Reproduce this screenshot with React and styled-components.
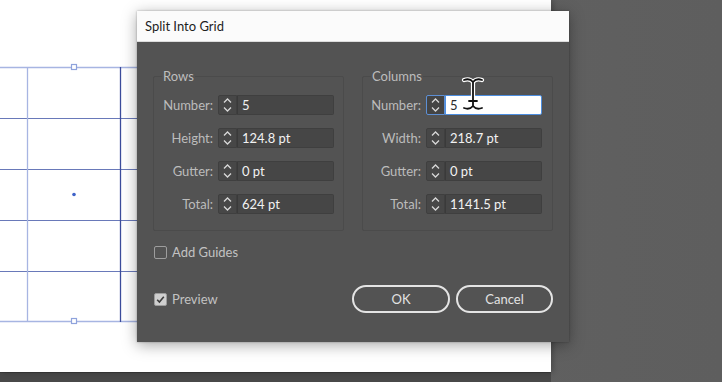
import React from "react";
import styled, { createGlobalStyle, css } from "styled-components";

const Global = createGlobalStyle`
  html, body { margin: 0; padding: 0; background: #5f5f5f; }
  body { font-family: Lato, "Open Sans", "Liberation Sans", sans-serif; }
  * { box-sizing: border-box; }
`;

const Page = styled.div`
  position: relative;
  width: 722px;
  height: 382px;
  overflow: hidden;
  display: grid;
  grid-template-columns: 551px 1fr;
  grid-template-rows: 372px 1fr;
  background: linear-gradient(90deg, #5a5a5a 0%, #626262 40%, #5e5e5e 100%);
`;

const Artboard = styled.div`
  background: #ffffff;
  box-shadow: 2px 0 6px rgba(0, 0, 0, 0.25);
  position: relative;
`;

const Pasteboard = styled.div`
  grid-row: 1 / span 2;
  grid-column: 2;
`;

const BottomStrip = styled.div`
  background: #484848;
  border-top: 1px solid #3a3a3a;
`;

const GridArt = styled.svg`
  display: block;
  width: 551px;
  height: 372px;
`;

const Dialog = styled.div`
  position: absolute;
  left: 137px;
  top: 11px;
  width: 432px;
  height: 331px;
  display: flex;
  flex-direction: column;
  box-shadow: 0 3px 14px rgba(0, 0, 0, 0.35), 0 0 2px rgba(0, 0, 0, 0.3);
`;

const TitleBar = styled.div`
  height: 31px;
  background: #fbfbfb;
  border-bottom: 1px solid #dcdcdc;
  display: flex;
  align-items: center;
  padding-left: 8px;
  font-size: 13px;
  color: #1e1e1e;
`;

const Body = styled.div`
  flex: 1;
  background: #535353;
  padding: 26px 16px 0 16px;
  display: flex;
  flex-direction: column;
`;

const Groups = styled.div`
  display: grid;
  grid-template-columns: 191px 191px;
  gap: 18px;
`;

const Group = styled.fieldset`
  margin: 0;
  height: 163px;
  border: 1px solid #4b4b4b;
  border-radius: 2px;
  padding: 11px ${(p) => p.$right}px 0 0;
  display: flex;
  flex-direction: column;
  gap: 13px;
`;

const Legend = styled.legend`
  font-size: 13px;
  color: #bdbdbd;
  padding: 0 1px;
  margin-left: 8px;
  line-height: 16px;
`;

const Row = styled.div`
  display: grid;
  grid-template-columns: ${(p) => p.$label}px 19px 1fr;
  column-gap: 0;
  height: 20px;
  align-items: stretch;
`;

const Label = styled.label`
  font-size: 13px;
  color: #bcbcbc;
  text-align: right;
  padding-right: 5px;
  line-height: 20px;
`;

const Spinner = styled.div`
  background: #474747;
  border: 1px solid #3f3f3f;
  border-radius: 2px 0 0 2px;
  display: flex;
  align-items: center;
  justify-content: center;
  ${(p) =>
    p.$active &&
    css`
      border: 1px solid #5d8fd4;
      background: #444;
    `}
`;

const Field = styled.div`
  background: #464646;
  border: 1px solid #3f3f3f;
  border-left: 1px solid #3a3a3a;
  border-radius: 0 2px 2px 0;
  font-size: 13px;
  color: #f2f2f2;
  padding-left: 4px;
  line-height: 18px;
  ${(p) =>
    p.$active &&
    css`
      background: #ffffff;
      border: 1px solid #4d8ee0;
      color: #2a2a2a;
    `}
`;

const Footer = styled.div`
  display: flex;
  flex-direction: column;
  padding-left: 1px;
`;

const CheckRow = styled.div`
  display: flex;
  align-items: center;
  gap: 5px;
  font-size: 13px;
  color: #c2c2c2;
  margin-top: ${(p) => p.$top}px;
`;

const Box = styled.span`
  width: 13px;
  height: 13px;
  border-radius: 2px;
  border: 1px solid #9d9d9d;
  background: ${(p) => (p.$checked ? "#cfcfcf" : "transparent")};
  display: inline-flex;
  align-items: center;
  justify-content: center;
`;

const BottomRow = styled.div`
  display: flex;
  align-items: center;
  justify-content: space-between;
  margin-top: 25px;
`;

const Buttons = styled.div`
  display: flex;
  gap: 6px;
`;

const Button = styled.button`
  width: ${(p) => p.$w}px;
  height: 28px;
  border-radius: 14px;
  border: 2px solid #e4e4e4;
  background: transparent;
  color: #e2e2e2;
  font-family: inherit;
  font-size: 13px;
  padding: 0;
`;

const Cursor = styled.svg`
  position: absolute;
  left: 461px;
  top: 77px;
`;

const Chevrons = () => (
  <svg width="11" height="16" viewBox="0 0 11 16">
    <path d="M2 5.5 L5.5 2 L9 5.5" fill="none" stroke="#d8d8d8" strokeWidth="1.3" />
    <path d="M2 10.5 L5.5 14 L9 10.5" fill="none" stroke="#d8d8d8" strokeWidth="1.3" />
  </svg>
);

const Input = ({ label, value, labelW, active }) => (
  <Row $label={labelW}>
    <Label>{label}</Label>
    <Spinner $active={active}>
      <Chevrons />
    </Spinner>
    <Field $active={active}>{value}</Field>
  </Row>
);

export default function App() {
  const light = "#a7b5e2";
  const dark = "#4f62ad";
  return (
    <>
      <Global />
      <Page>
        <Artboard>
          <GridArt viewBox="0 0 551 372">
            {[118, 169, 220, 271].map((y) => (
              <line key={y} x1="0" x2="551" y1={y + 0.5} y2={y + 0.5} stroke={dark} strokeWidth="1.2" opacity="0.85" />
            ))}
            <line x1="0" x2="551" y1="67.5" y2="67.5" stroke={light} strokeWidth="1.3" />
            <line x1="0" x2="551" y1="321.5" y2="321.5" stroke={light} strokeWidth="1.3" />
            <line x1="27.5" x2="27.5" y1="67" y2="322" stroke={light} strokeWidth="1.3" />
            <line x1="120.5" x2="120.5" y1="67" y2="322" stroke="#3c4d9c" strokeWidth="1.3" />
            <rect x="71.5" y="64.5" width="5" height="5" fill="#fff" stroke="#8fa3dc" strokeWidth="1.2" />
            <rect x="71.5" y="318.5" width="5" height="5" fill="#fff" stroke="#8fa3dc" strokeWidth="1.2" />
            <circle cx="74" cy="194.5" r="1.8" fill="#3f63c9" />
          </GridArt>
        </Artboard>
        <Pasteboard />
        <BottomStrip />

        <Dialog>
          <TitleBar>Split Into Grid</TitleBar>
          <Body>
            <Groups>
              <Group $right={9}>
                <Legend>Rows</Legend>
                <Input label="Number:" value="5" labelW={64} />
                <Input label="Height:" value="124.8 pt" labelW={64} />
                <Input label="Gutter:" value="0 pt" labelW={64} />
                <Input label="Total:" value="624 pt" labelW={64} />
              </Group>
              <Group $right={10}>
                <Legend>Columns</Legend>
                <Input label="Number:" value="5" labelW={63} active />
                <Input label="Width:" value="218.7 pt" labelW={63} />
                <Input label="Gutter:" value="0 pt" labelW={63} />
                <Input label="Total:" value="1141.5 pt" labelW={63} />
              </Group>
            </Groups>
            <Footer>
              <CheckRow $top={13}>
                <Box />
                Add Guides
              </CheckRow>
              <BottomRow>
                <CheckRow $top={0}>
                  <Box $checked>
                    <svg width="11" height="11" viewBox="0 0 11 11">
                      <path d="M2.2 5.8 L4.4 8 L8.8 2.8" fill="none" stroke="#3c3c3c" strokeWidth="1.6" />
                    </svg>
                  </Box>
                  Preview
                </CheckRow>
                <Buttons>
                  <Button $w={98}>OK</Button>
                  <Button $w={97}>Cancel</Button>
                </Buttons>
              </BottomRow>
            </Footer>
          </Body>
        </Dialog>

        <Cursor width="24" height="34" viewBox="0 0 24 34">
          <g fill="none" strokeLinecap="round">
            <path d="M3 3 C7 1.5 10 2.5 12 5 C14 2.5 17 1.5 21 3 M12 5 V29 M3 31 C7 32.5 10 31.5 12 29 C14 31.5 17 32.5 21 31 M8 24 H16" stroke="#fff" strokeWidth="4.2" />
            <path d="M3 3 C7 1.5 10 2.5 12 5 C14 2.5 17 1.5 21 3 M12 5 V29 M3 31 C7 32.5 10 31.5 12 29 C14 31.5 17 32.5 21 31 M8 24 H16" stroke="#111" strokeWidth="1.8" />
          </g>
        </Cursor>
      </Page>
    </>
  );
}
